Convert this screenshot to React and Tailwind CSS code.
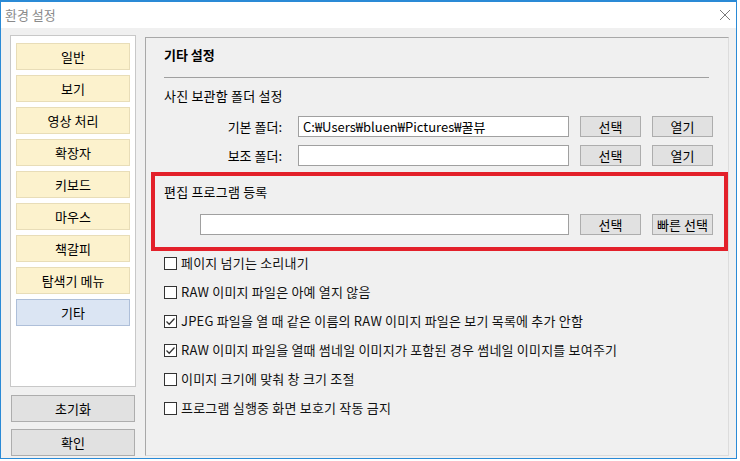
const menu = ['일반', '보기', '영상 처리', '확장자', '키보드', '마우스', '책갈피', '탐색기 메뉴', '기타'];

const options = [
  { label: '페이지 넘기는 소리내기', checked: false },
  { label: 'RAW 이미지 파일은 아예 열지 않음', checked: false },
  { label: 'JPEG 파일을 열 때 같은 이름의 RAW 이미지 파일은 보기 목록에 추가 안함', checked: true },
  { label: 'RAW 이미지 파일을 열때 썸네일 이미지가 포함된 경우 썸네일 이미지를 보여주기', checked: true },
  { label: '이미지 크기에 맞춰 창 크기 조절', checked: false },
  { label: '프로그램 실행중 화면 보호기 작동 금지', checked: false },
];

const Btn = ({ children }) => (
  <button className="w-[61px] h-[21px] bg-[#e1e1e1] border border-[#adadad] text-[13px] leading-none text-black flex items-center justify-center">
    {children}
  </button>
);

const Field = ({ value, width }) => (
  <div className={`${width} h-[21px] bg-white border border-[#a0a0a0] pl-[4px] flex items-center text-[13px] text-black whitespace-nowrap overflow-hidden`}>
    {value}
  </div>
);

const Check = ({ checked, label }) => (
  <div className="h-[24px] flex items-center gap-[4px]">
    <span className="w-[13px] h-[13px] border border-[#333333] bg-white flex items-center justify-center shrink-0">
      {checked && (
        <svg width="11" height="11" viewBox="0 0 11 11">
          <path d="M1.5 5.5 L4.2 8.2 L9.5 2.5" fill="none" stroke="#333" strokeWidth="1.3" />
        </svg>
      )}
    </span>
    <span className="text-[13px] text-[#111] tracking-[0.2px] whitespace-nowrap">{label}</span>
  </div>
);

export default function App() {
  return (
    <div className="w-[740px] h-[461px] bg-white" style={{ fontFamily: '"Noto Sans CJK KR", "Noto Sans", sans-serif' }}>
      <div className="w-[737px] h-[459px] border border-[#2a8ad6] border-t-2 flex flex-col">
        {/* title bar */}
        <div className="h-[26px] bg-white flex items-center justify-between pl-[4px] pr-[5px]">
          <span className="text-[13px] text-[#8a8a8a]">환경 설정</span>
          <svg width="12" height="12" viewBox="0 0 12 12">
            <path d="M1 1 L11 11 M11 1 L1 11" stroke="#7a7a7a" strokeWidth="1" />
          </svg>
        </div>

        {/* body */}
        <div className="flex-1 bg-[#f0f0f0] flex pl-[9px]">
          {/* left column */}
          <div className="w-[126px] flex flex-col pt-[7px]">
            <div className="h-[352px] bg-white border border-[#c8c8c8] px-[5px] pt-[7px] flex flex-col gap-[5px]">
              {menu.map((m, i) => (
                <div
                  key={m}
                  className={
                    i === menu.length - 1
                      ? 'h-[27px] bg-[#dbe5f3] border border-[#aebfd9] flex items-center justify-center text-[13px] text-black'
                      : 'h-[27px] bg-[#fcf2cd] border border-[#e8ddb8] flex items-center justify-center text-[13px] text-black'
                  }
                >
                  {m}
                </div>
              ))}
            </div>
            <button className="mt-[8px] ml-[1px] w-[124px] h-[27px] bg-[#e1e1e1] border border-[#adadad] text-[13px] text-black">초기화</button>
            <button className="mt-[7px] ml-[1px] w-[124px] h-[27px] bg-[#e1e1e1] border border-[#adadad] text-[13px] text-black">확인</button>
          </div>

          {/* right panel */}
          <div className="ml-[9px] mt-[9px] mb-[2px] w-[584px] border border-[#a8a8a8] border-r-[#dcdcdc] border-b-[#dcdcdc] flex flex-col">
            <div className="pl-[18px] h-[34px] flex items-center text-[13px] font-bold text-black">기타 설정</div>
            <div className="ml-[18px] mt-[5px] w-[545px] border-t border-[#a0a0a0]" />
            <div className="pl-[18px] h-[36px] flex items-center text-[13px] text-black tracking-[0.2px]">사진 보관함 폴더 설정</div>

            <div className="pl-[18px] mt-[2px] flex items-center">
              <span className="w-[118px] text-right text-[13px] text-black">기본 폴더:</span>
              <div className="ml-[16px]"><Field width="w-[271px]" value="C:₩Users₩bluen₩Pictures₩꿀뷰" /></div>
              <div className="ml-[11px]"><Btn>선택</Btn></div>
              <div className="ml-[11px]"><Btn>열기</Btn></div>
            </div>
            <div className="pl-[18px] mt-[8px] flex items-center">
              <span className="w-[118px] text-right text-[13px] text-black">보조 폴더:</span>
              <div className="ml-[16px]"><Field width="w-[271px]" value="" /></div>
              <div className="ml-[11px]"><Btn>선택</Btn></div>
              <div className="ml-[11px]"><Btn>열기</Btn></div>
            </div>

            {/* highlighted group */}
            <div className="ml-[5px] mt-[6px] w-[577px] h-[79px] border-4 border-[#e3202a] pl-[9px]">
              <div className="h-[32px] flex items-center text-[13px] text-black tracking-[0.2px]">편집 프로그램 등록</div>
              <div className="mt-[6px] flex items-center">
                <div className="ml-[36px]"><Field width="w-[369px]" value="" /></div>
                <div className="ml-[11px]"><Btn>선택</Btn></div>
                <div className="ml-[11px]"><Btn>빠른 선택</Btn></div>
              </div>
            </div>

            <div className="pl-[18px] flex flex-col gap-[5px]">
              {options.map(o => (
                <Check key={o.label} checked={o.checked} label={o.label} />
              ))}
            </div>
          </div>
        </div>
      </div>
    </div>
  );
}
